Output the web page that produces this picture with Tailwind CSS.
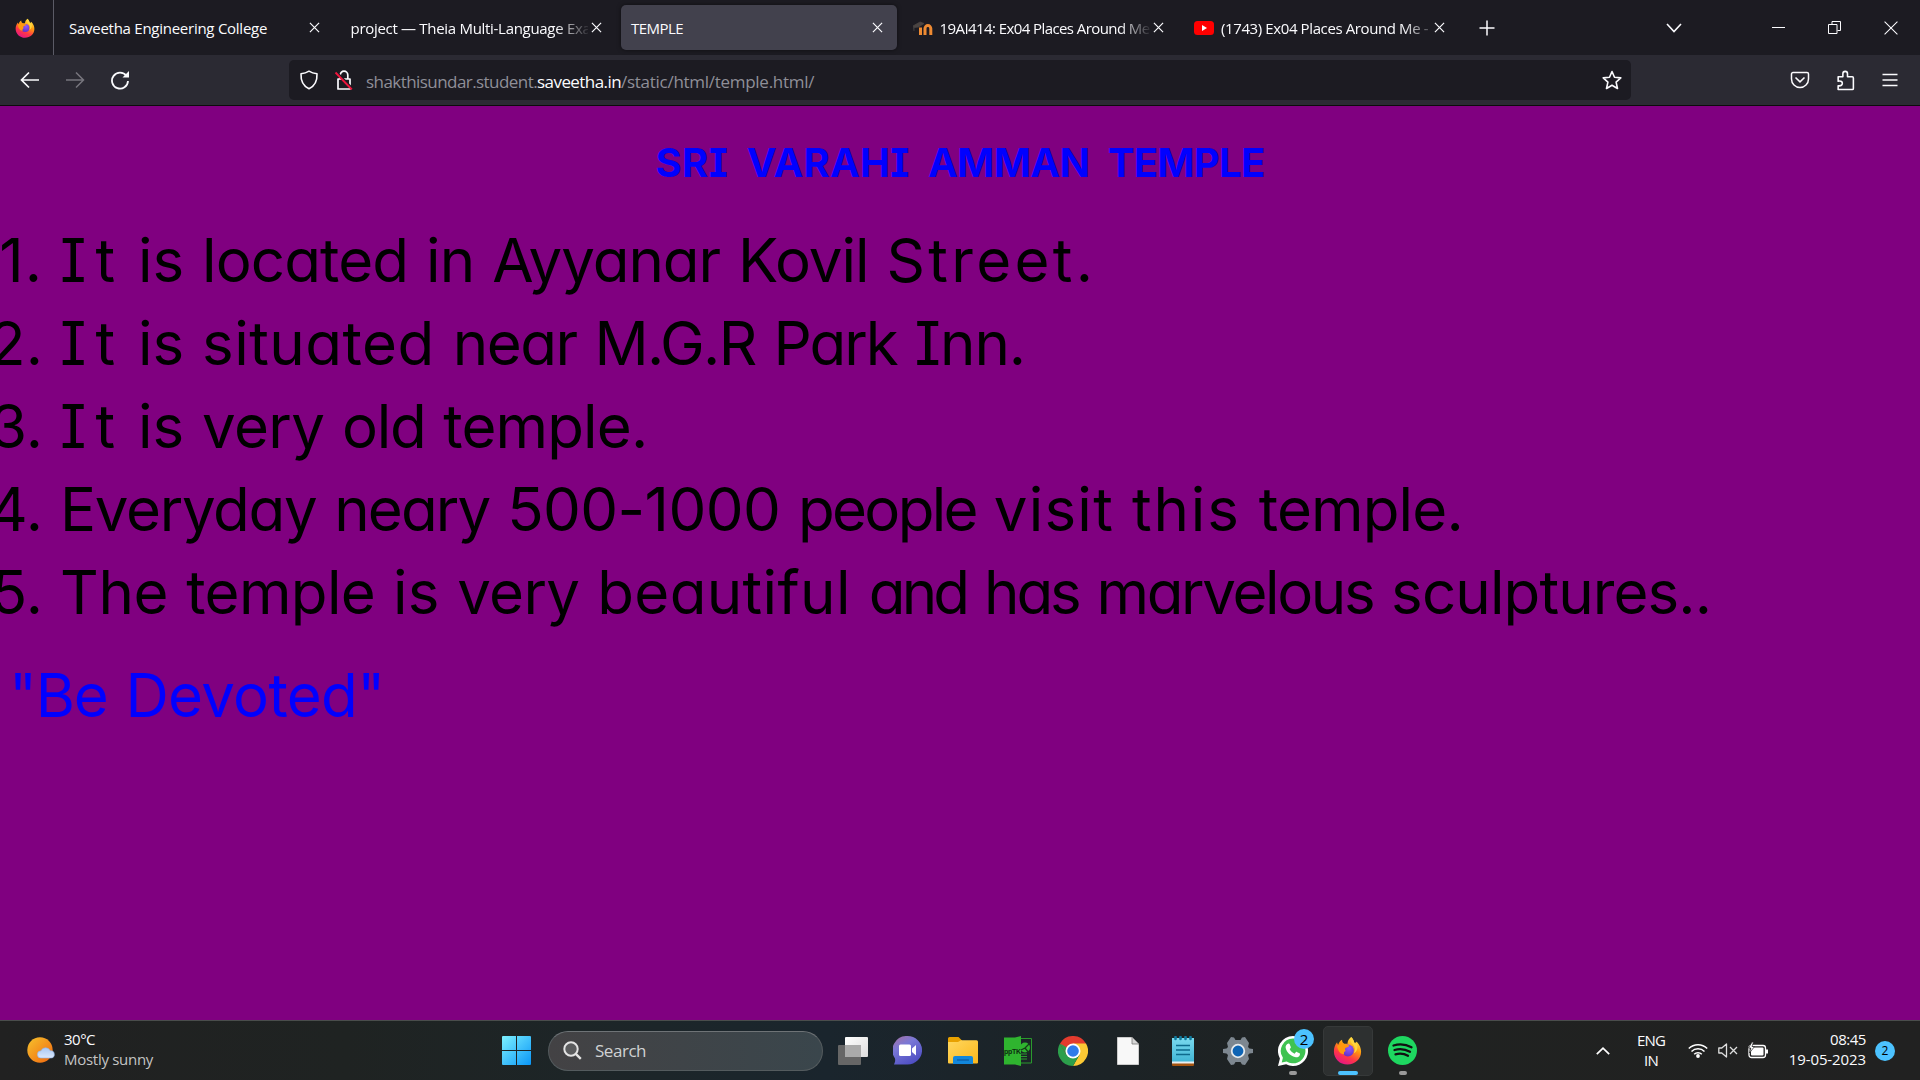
<!DOCTYPE html>
<html lang="en">
<head>
<meta charset="utf-8">
<title>TEMPLE</title>
<script src="https://cdn.jsdelivr.net/npm/@tailwindcss/browser@4"></script>
</head>
<body class="w-[1920px] h-[1080px] overflow-hidden bg-[#800080] flex flex-col font-['Segoe_UI','Open_Sans',sans-serif] text-[#fbfbfe]">
<!-- svg symbols shared by several places -->
<svg class="absolute size-0">
  <defs>
    <linearGradient id="fxBody" x1=".8" y1="0" x2=".3" y2="1"><stop offset="0" stop-color="#fff44f"/><stop offset=".4" stop-color="#ff980e"/><stop offset=".7" stop-color="#ff3647"/><stop offset="1" stop-color="#e31587"/></linearGradient>
    <radialGradient id="fxGlobe" cx=".6" cy=".3" r=".8"><stop offset="0" stop-color="#9059ff"/><stop offset="1" stop-color="#5b2bc0"/></radialGradient>
  </defs>
  <symbol id="firefox" viewBox="0 0 32 32">
    <path fill="url(#fxBody)" d="M20 1c2 2 3 4 3.600 6.500C25 7.500 26 7 26 6c3.500 3.500 5 7.500 5 11.500C31 25.500 24.500 31.500 16 31.500S1 25 1 17c0-4 1.200-7 3.500-10 .2 1.500.6 2 1.200 2.600C6.500 7 8 5 10 4c0 2 .8 3.500 2.500 4.500L16 8.500C16 5.500 17.500 3 20 1z"/>
    <circle cx="16.500" cy="16" r="6.500" fill="url(#fxGlobe)"/>
    <path fill="#ff980e" d="M4.500 11c4-2.500 7-2.600 9.500-1.500 2 .3 3.500.5 4 1.200-1 1.800-3.400 2-4.500 2.600-.3 1.500-.2 2.500.6 3.200-1.800.5-2.500 2-1.700 3.800-4 0-6.900-3.500-7.900-9.300z"/>
    <path fill="#ffd53e" d="M20 1c-1.500 3.500 0 6 2 8.500s3 5.500 1 9.500c4-2 5-6.500 3-11-.6.600-1.500.7-2.400-.4C23 5 22 3 20 1z"/>
  </symbol>
  <symbol id="x" viewBox="0 0 12 12"><path d="M1 1l10 10M11 1L1 11" fill="none" stroke="#fbfbfe" stroke-width="1.300"/></symbol>
</svg>

<!-- tab strip -->
<header class="h-[55px] shrink-0 bg-[#1c1b22] flex items-center text-[15px]">
  <div class="w-[54px] h-full border-r border-[#5b5b66] flex items-center pl-[15px]"><svg class="size-5"><use href="#firefox"/></svg></div>
  <div class="w-[281.5px] ml-[2px] h-[45px] flex items-center pl-[13px]"><div class="w-[237px] pt-[2px] whitespace-nowrap tracking-[-0.26px]">Saveetha Engineering College</div><svg class="size-[11px] ml-[3px]"><use href="#x"/></svg></div>
  <div class="w-[281.5px] h-[45px] flex items-center pl-[13px]"><div class="w-[237px] pt-[2px] whitespace-nowrap tracking-[-0.3px] [mask-image:linear-gradient(to_right,black_205px,transparent_240px)]">project — Theia Multi-Language Exa</div><svg class="size-[11px] ml-[3px]"><use href="#x"/></svg></div>
  <div class="w-[281.5px] h-[45px] pl-[2px] pr-[3.500px]"><div class="h-full rounded-[5px] bg-[#42414d] shadow-[0_0_4px_rgba(0,0,0,0.5)] flex items-center pl-[10px]"><div class="w-[238px] pt-[2px] tracking-[-0.55px]">TEMPLE</div><svg class="size-[11px] ml-[3px]"><use href="#x"/></svg></div></div>
  <div class="w-[281.5px] h-[45px] flex items-center pl-[12px]">
    <svg class="w-5 h-5 mr-[7px]" viewBox="0 0 20 20"><path d="M12 17v-6.500a2.800 2.800 0 0 1 5.800 0V17M7.500 9.500V17" fill="none" stroke="#ee8a32" stroke-width="3"/><path d="M0 8l7-4 4 1.500L5.500 9 1 9.500v3.500" fill="#4a4442" stroke="#4a4442" stroke-width=".8"/></svg>
    <div class="w-[210px] pt-[2px] whitespace-nowrap tracking-[-0.58px] [mask-image:linear-gradient(to_right,black_180px,transparent_212px)]">19AI414: Ex04 Places Around Me</div><svg class="size-[11px] ml-[3px]"><use href="#x"/></svg></div>
  <div class="w-[281.5px] h-[45px] flex items-center pl-[12px]">
    <svg class="w-5 h-5 mr-[7px]" viewBox="0 0 20 20"><rect y="3" width="20" height="14" rx="3.500" fill="red"/><path d="M8 7l5 3-5 3z" fill="#fff"/></svg>
    <div class="w-[211px] pt-[2px] whitespace-nowrap tracking-[-0.39px] [mask-image:linear-gradient(to_right,black_182px,transparent_216px)]">(1743) Ex04 Places Around Me -</div><svg class="size-[11px] ml-[2px]"><use href="#x"/></svg></div>
  <svg class="size-4 ml-[15px]" viewBox="0 0 16 16"><path d="M8 .5v15M.5 8h15" stroke="#fbfbfe" stroke-width="1.500"/></svg>
  <div class="ml-auto flex items-center">
    <svg class="w-4 h-[10px] mr-[90px]" viewBox="0 0 16 10"><path d="M1 1l7 7.500L15 1" fill="none" stroke="#fbfbfe" stroke-width="1.600"/></svg>
    <div class="w-[13px] h-px bg-[#fbfbfe] mr-[43px]"></div>
    <svg class="size-[13px] mr-[43px]" viewBox="0 0 13 13"><path d="M.5 3.500h8.500v9H.5zM4 3V.5h8.500V9.500H9.500" fill="none" stroke="#fbfbfe"/></svg>
    <svg class="size-[14px] mr-[22px]" viewBox="0 0 12 12"><path d="M.5.5l11 11M11.500.5l-11 11" stroke="#fbfbfe" stroke-width=".9"/></svg>
  </div>
</header>

<!-- navigation bar -->
<nav class="h-[51px] shrink-0 bg-[#2b2a33] border-b border-[#0c0c0d] flex items-center">
  <svg class="size-5 ml-5" viewBox="0 0 20 20"><path d="M19 10H2M9 2.500L1.500 10 9 17.500" fill="none" stroke="#fbfbfe" stroke-width="1.700"/></svg>
  <svg class="size-5 ml-[25px]" viewBox="0 0 20 20"><path d="M1 10h17M11 2.500l7.500 7.500-7.500 7.500" fill="none" stroke="#77767e" stroke-width="1.500"/></svg>
  <svg class="size-5 ml-[25px]" viewBox="0 0 20 20"><path d="M16.500 6A8 8 0 1 0 18 11" fill="none" stroke="#fbfbfe" stroke-width="1.800"/><path d="M19 1v6.500h-6.500z" fill="#fbfbfe"/></svg>
  <div class="ml-[159px] w-[1342px] h-10 rounded-[5px] bg-[#1c1b22] flex items-center">
    <svg class="size-5 ml-[10px]" viewBox="0 0 20 20"><path d="M10 1.200c2.500 1.600 5 2.300 8 2.600.3 6.700-2 12.200-8 15C4 16 1.700 10.500 2 3.800c3-.3 5.500-1 8-2.600z" fill="none" stroke="#fbfbfe" stroke-width="1.600" stroke-linejoin="round"/></svg>
    <svg class="size-5 ml-[15px]" viewBox="0 0 20 20"><path d="M6.200 9V5a3.800 3.800 0 0 1 7.600 0v4M4 9h12v10H4z" fill="none" stroke="#fbfbfe" stroke-width="1.700" stroke-linejoin="round"/><path d="M3 2.500L18.500 18.500" stroke="#1c1b22" stroke-width="2"/><path d="M1.500 2.500L17.800 19.500" stroke="#f0143c" stroke-width="1.900"/></svg>
    <div class="ml-[12px] pt-[3px] text-[17px] whitespace-nowrap text-[#8f8f98]"><span class="tracking-[-0.56px]">shakthisundar.student.</span><span class="tracking-[-0.57px] text-[#fbfbfe]">saveetha.in</span><span class="tracking-[-0.28px]">/static/html/temple.html/</span></div>
    <svg class="size-5 ml-auto mr-[9px]" viewBox="0 0 20 20"><path d="M10 1.500l2.500 5.800 6.300.6-4.700 4.200 1.400 6.400L10 15.200l-5.500 3.300 1.400-6.400L1.200 7.900l6.300-.6z" fill="none" stroke="#fbfbfe" stroke-width="1.600" stroke-linejoin="round"/></svg>
  </div>
  <svg class="size-5 ml-[159px]" viewBox="0 0 20 20"><path d="M3 2.500h14a1.500 1.500 0 0 1 1.500 1.500v5a8.500 8.500 0 0 1-17 0V4A1.500 1.500 0 0 1 3 2.500z" fill="none" stroke="#fbfbfe" stroke-width="1.500"/><path d="M5.500 7.500L10 11.800l4.500-4.300" fill="none" stroke="#fbfbfe" stroke-width="1.600"/></svg>
  <svg class="size-[21px] ml-[25px]" viewBox="0 0 20 20"><path d="M3 18.500V15c3 .5 4-1 4-2.300S6 10 3 10.700V6.500h4.500V3.500a2.200 2.200 0 0 1 4.400 0v3h4.600a1 1 0 0 1 1 1v10a1 1 0 0 1-1 1z" fill="none" stroke="#fbfbfe" stroke-width="1.500" stroke-linejoin="round"/></svg>
  <svg class="w-4 h-[14px] ml-[26px]" viewBox="0 0 16 14"><path d="M.5 1.500h15M.5 7h15M.5 12.500h15" stroke="#fbfbfe" stroke-width="1.400"/></svg>
</nav>

<!-- page -->
<main class="grow text-black font-['Inter',sans-serif] [font-feature-settings:'cv08','cv11']">
  <h1 class="mt-[29px] h-[56px] leading-[56px] text-center text-[40px] font-bold text-[#0000ff] [word-spacing:9px]"><span class="tracking-[0.4px]">SRI</span> <span class="tracking-[0.2px]">VARAHI</span> <span class="tracking-[-0.7px]">AMMAN</span> <span class="tracking-[-0.7px]">TEMPLE</span></h1>
  <ol class="mt-[28px] text-[60px] leading-[83px] whitespace-nowrap [word-spacing:1px]">
    <li class="flex"><span class="w-[43px] mr-[17px] flex justify-end tracking-[1px]">1.</span><p><span class="tracking-[9px]">I</span><span class="tracking-[5px]">t</span> is <span class="tracking-[-0.88px]">located</span> <span class="tracking-[-0.91px]">in</span> <span class="tracking-[-1.01px]">Ayyanar</span> <span class="tracking-[-0.98px]">Kovil</span> <span class="tracking-[3.3px]">Street.</span></p></li>
    <li class="flex"><span class="w-[43px] mr-[17px] flex justify-end">2.</span><p><span class="tracking-[9px]">I</span><span class="tracking-[5px]">t</span> is <span class="tracking-[0.49px]">situated</span> <span class="tracking-[-1.48px]">near</span> <span class="tracking-[-1.65px]">M.G.R</span> <span class="tracking-[-2px]">Park</span> <span class="tracking-[-1.04px]">Inn.</span></p></li>
    <li class="flex"><span class="w-[43px] mr-[17px] flex justify-end">3.</span><p><span class="tracking-[9px]">I</span><span class="tracking-[5px]">t</span> is <span class="tracking-[-0.66px]">very</span> <span class="tracking-[-1.31px]">old</span> <span class="tracking-[-0.87px]">temple.</span></p></li>
    <li class="flex"><span class="w-[43px] mr-[17px] flex justify-end">4.</span><p><span class="tracking-[-1.31px]">Everyday</span> <span class="tracking-[-1.87px]">neary</span> <span class="tracking-[-0.6px]">500-1000</span> <span class="tracking-[-2.69px]">people</span> <span class="tracking-[1.24px]">visit</span> <span class="tracking-[1.92px]">this</span> <span class="tracking-[-0.87px]">temple.</span></p></li>
    <li class="flex"><span class="w-[43px] mr-[17px] flex justify-end">5.</span><p><span class="tracking-[-0.3px]">The</span> <span class="tracking-[-0.63px]">temple</span> is <span class="tracking-[-0.66px]">very</span> <span class="tracking-[0.37px]">beautiful</span> <span class="tracking-[-3.84px]">and</span> <span class="tracking-[-3.08px]">has</span> <span class="tracking-[-2.37px]">marvelous</span> <span class="tracking-[-0.88px]">sculptures..</span></p></li>
  </ol>
  <p class="mt-[20px] ml-[9px] text-[60px] leading-[83px] text-[#0000ff] [word-spacing:1px]"><span class="tracking-[-1.2px]">"Be</span> <span class="tracking-[-0.67px]">Devoted"</span></p>
</main>

<!-- taskbar -->
<footer class="h-[60px] shrink-0 border-t border-[#4a4d4c] bg-[linear-gradient(to_right,#212121_0%,#1f2322_18%,#1d2527_30%,#1a252d_43%,#1c2326_58%,#202221_72%,#212121_100%)] flex items-center text-[15px] leading-5">
  <div class="w-[502px] flex items-center pl-[27px]">
    <svg class="w-7 h-[27px]" viewBox="0 0 28 27"><defs><linearGradient id="sun" x1="0" y1="0" x2="1" y2="1"><stop stop-color="#f6c22d"/><stop offset="1" stop-color="#f0650e"/></linearGradient><linearGradient id="cl" x2="0" y2="1"><stop stop-color="#a9c8f5"/><stop offset="1" stop-color="#dbe8fb"/></linearGradient></defs><circle cx="13" cy="13" r="12.700" fill="url(#sun)"/><path d="M14 21a3.600 3.600 0 0 1 0-7.200 5 5 0 0 1 9.200 0 3.600 3.600 0 0 1 1 7.200z" fill="url(#cl)" stroke="#8fb0e6" stroke-width=".6"/></svg>
    <div class="ml-[9px] pb-1"><div class="tracking-[-0.51px]">30°C</div><div class="text-[#c4c4c4] tracking-[-0.28px]">Mostly sunny</div></div>
  </div>
  <svg class="size-[29px]" viewBox="0 0 29 29"><defs><linearGradient id="win" x1="0" y1="0" x2="1" y2="1"><stop stop-color="#7df1ff"/><stop offset="1" stop-color="#0a96f7"/></linearGradient></defs><path d="M1 0h13v14H0V1a1 1 0 0 1 1-1zM15 0h13a1 1 0 0 1 1 1v13H15zM0 15h14v14H1a1 1 0 0 1-1-1zM15 15h14v13a1 1 0 0 1-1 1H15z" fill="url(#win)"/></svg>
  <div class="ml-[17px] w-[275px] h-10 rounded-full border border-[#545b5e] border-t-[#6e7376] bg-linear-to-r from-[#434244] to-[#3a464c] flex items-center pl-[14px] text-[17px] text-[#d0d2d3]">
    <svg class="size-[19px] mr-[13px]" viewBox="0 0 19 19"><circle cx="8" cy="8" r="6.700" fill="#5b5c5e" stroke="#e4e4e4" stroke-width="2"/><path d="M12.800 12.800l5 5" stroke="#e4e4e4" stroke-width="2.400"/></svg>
    <span class="tracking-[-0.47px]">Search</span>
  </div>
  <div class="ml-[2px] grid grid-cols-[repeat(11,55px)] h-full items-center justify-items-center">
    <svg class="w-[30px] h-[28px]" viewBox="0 0 30 28"><defs><linearGradient id="tv" x2="1" y2="1"><stop stop-color="#fff"/><stop offset="1" stop-color="#ddd"/></linearGradient></defs><rect y="8" width="23" height="20" rx="1" fill="#666"/><rect x="7" width="23" height="20" rx="1" fill="url(#tv)"/><path d="M7 8h16v12H7z" fill="#aaa"/></svg>
    <svg class="size-[29px]" viewBox="0 0 29 29"><defs><linearGradient id="ch" x1="0" y1="0" x2=".6" y2="1"><stop stop-color="#a9709f"/><stop offset=".4" stop-color="#7a78d6"/><stop offset="1" stop-color="#4f4fc4"/></linearGradient></defs><path d="M14.500 0a14.500 14.200 0 0 1 0 28.500H1c1-2 1.500-3.500 1-6A14.500 14.300 0 0 1 14.500 0z" fill="url(#ch)"/><rect x="6" y="8.500" width="12" height="11.500" rx="1.500" fill="#fff"/><path d="M19 12.500l4-3.500v10.500l-4-3.500z" fill="#fff"/></svg>
    <svg class="w-[30px] h-[27px]" viewBox="0 0 30 27"><defs><linearGradient id="fo" x1="0" y1="0" x2="1" y2="1"><stop stop-color="#ffd75e"/><stop offset="1" stop-color="#fbb71c"/></linearGradient></defs><path d="M0 1.500A1.500 1.500 0 0 1 1.500 0h9L14 3.500v6H0z" fill="#e8a100"/><path d="M0 5h10l3-1.800h15.500A1.500 1.500 0 0 1 30 4.700V25.500a1 1 0 0 1-1 1H1a1 1 0 0 1-1-1z" fill="url(#fo)"/><path d="M5 27v-6a2 2 0 0 1 2-2h16a2 2 0 0 1 2 2v6z" fill="#1287dc"/><path d="M9 23h12" stroke="#0c5aa0" stroke-width="1.200"/></svg>
    <svg class="w-[28px] h-[30px]" viewBox="0 0 28 30"><path d="M17 2.500h10.500v24.500H17M17 18h6M17 20.500h6M17 23h6" fill="none" stroke="#2a9a2d" stroke-width="1"/><circle cx="21" cy="11.500" r="5" fill="#2fb42f"/><path d="M16 14.500l5-2.500 5-5M21 12l4 5" stroke="#153a18" stroke-width="1.300" fill="none"/><path d="M0 1.500h11L17 0v30l-6-1.500H0z" fill="#2fb42f"/><text x="0" y="18" font-size="7" font-weight="700" font-family="Liberation Sans" textLength="17" fill="#0d2b10">ppTK</text></svg>
    <svg class="size-[30px]" viewBox="0 0 48 48"><path d="M24 24L3.200 12A24 24 0 0 1 44.800 12z" fill="#e33b2e"/><path d="M24 24V12h20.800A24 24 0 0 1 24 48l10.400-18z" fill="#fcc934"/><path d="M24 24l10.400 6L24 48A24 24 0 0 1 3.200 12l10.400 18z" fill="#2c9f4b"/><path d="M3.200 12L13.600 30 24 12z" fill="#e33b2e"/><path d="M3.200 12L13.600 30 24 24z" fill="#2c9f4b"/><circle cx="24" cy="24" r="12" fill="#fff"/><circle cx="24" cy="24" r="9.300" fill="#2f7bea"/></svg>
    <svg class="w-[22px] h-[28px]" viewBox="0 0 22 28"><path d="M0 0h15l7 7v21H0z" fill="#f8f8f8" stroke="#8c8c8c" stroke-width=".8"/><path d="M15 0v7h7z" fill="#d6d6d6" stroke="#777" stroke-width=".8"/></svg>
    <svg class="w-[22px] h-[30px]" viewBox="0 0 22 30"><defs><linearGradient id="np" x2="0" y2="1"><stop stop-color="#7ad9ee"/><stop offset="1" stop-color="#3eb4d4"/></linearGradient></defs><rect y="2" width="22" height="25" fill="url(#np)"/><path d="M0 25.500h22V28H0z" fill="#e9eef0"/><path d="M0 27.500h22v1.500a1 1 0 0 1-1 1H1a1 1 0 0 1-1-1z" fill="#a4530f"/><path d="M4 9.500h14M4 14h14M4 18.500h14" stroke="#0d6a8c" stroke-width="1.500"/><path d="M3.500 1v2M8.500 1v2M13.500 1v2M18.500 1v2" stroke="#0f7a9e" stroke-width="2.600" stroke-linecap="round"/></svg>
    <svg class="size-[30px]" viewBox="0 0 30 30"><path d="M8 1l3 .5 1.500 2.500h5L19 1.500 22 1l4 6-1 4 1.500 1.500L30 13v4l-3.500.5L25 19l1 4-4 6-3-.5-1.500-2.500h-5L11 28.500 8 29l-4-6 1-4-1.500-1.500L0 17v-4l3.500-.5L5 11 4 7z" fill="#7d8790"/><circle cx="15" cy="15" r="6.300" fill="#0e64b4" stroke="#e6eaed" stroke-width="1.800"/></svg>
    <div class="relative size-full flex items-center justify-center">
      <svg class="size-[30px]" viewBox="0 0 30 30"><path d="M15 0a15 15 0 1 1-6.900 28.300L0 30l1.900-7.600A15 15 0 0 1 15 0z" fill="#fff"/><path d="M15 2.500a12.400 12.400 0 1 1-6.400 23L3.700 26.500l1.200-4.700A12.400 12.400 0 0 1 15 2.500z" fill="#3fc351"/><path d="M10.500 7.500c.7 0 1 .2 1.300.9l1 2.500c.2.500-.1 1-1.200 2.200 1 2.200 2.700 3.600 5 4.600 1.500-1.900 1.600-2 2.200-1.800l2.700 1.300c.6.300.6.700.4 1.600-.5 2-2.500 2.700-4 2.500-5-.8-9.500-5-10.300-9.800-.2-1.800 1.200-3.800 2.900-4z" fill="#fff"/></svg>
      <span class="absolute left-[29px] top-[8px] size-5 rounded-full bg-[#4cc2ff] text-black text-[15px] leading-5 text-center">2</span>
      <i class="absolute bottom-[5px] w-2 h-1 rounded-full bg-[#9a9a9a]"></i>
    </div>
    <div class="relative size-[50px] rounded-[5px] bg-[#2d3030] border border-[#363939] flex items-center justify-center">
      <svg class="size-[29px]"><use href="#firefox"/></svg>
      <i class="absolute bottom-0 w-5 h-1 rounded-full bg-[#4cc2ff]"></i>
    </div>
    <div class="relative size-full flex items-center justify-center">
      <svg class="size-[29px]" viewBox="0 0 29 29"><circle cx="14.500" cy="14.500" r="14.500" fill="#1ed760"/><path d="M5.500 9.500c6-1.800 12.500-1.200 18 1.800M6.500 14c5-1.500 10.500-1 15.500 1.800M7.500 18.300c4.500-1.200 8.500-.8 12.500 1.500" fill="none" stroke="#111" stroke-width="2.300" stroke-linecap="round"/></svg>
      <i class="absolute bottom-[5px] w-2 h-1 rounded-full bg-[#9a9a9a]"></i>
    </div>
  </div>
  <div class="ml-auto flex items-center pr-[25px]">
    <svg class="w-[14px] h-2 mr-[27px]" viewBox="0 0 14 8"><path d="M.8 7.200L7 1.200l6.200 6" fill="none" stroke="#fff" stroke-width="1.700"/></svg>
    <div class="w-[28px] text-center mr-[23px] pb-[2px] whitespace-nowrap"><div class="tracking-[-0.8px]">ENG</div><div class="tracking-[-0.7px]">IN</div></div>
    <svg class="w-5 h-[15px] mr-[10px]" viewBox="0 0 20 15"><g fill="none" stroke="#fff" stroke-width="1.500"><path d="M.8 5.500a13 13 0 0 1 18.400 0M3.500 8.500a9.200 9.200 0 0 1 13 0M6.200 11.200a5.400 5.400 0 0 1 7.600 0"/></g><circle cx="10" cy="13" r="1.900" fill="#fff"/></svg>
    <svg class="w-5 h-[15px] mr-[10px]" viewBox="0 0 20 15"><path d="M.8 5h3L8.500 1v13l-4.700-4h-3z" fill="none" stroke="#ddd" stroke-width="1.300" stroke-linejoin="round"/><path d="M12 4l7 7M19 4l-7 7" stroke="#ddd" stroke-width="1.300"/></svg>
    <svg class="w-5 h-[17px] mr-[20px]" viewBox="0 0 20 17"><rect x="1" y="3.500" width="16.500" height="12" rx="2.500" fill="none" stroke="#fff" stroke-width="1.300"/><rect x="3" y="5.500" width="12.500" height="8" rx="1" fill="#fff"/><path d="M18 7.500h2v4h-2z" fill="#fff"/><path d="M4 0L.5 6h2.300L1.500 11 6.500 4.500H4L5.500 0z" fill="#fff" stroke="#212121" stroke-width=".7"/></svg>
    <div class="w-[78px] text-right whitespace-nowrap mr-[9px] pb-1"><div class="tracking-[-0.45px]">08:45</div><div class="tracking-[-0.1px]">19-05-2023</div></div>
    <span class="size-5 rounded-full bg-[#4cc2ff] text-black text-[12px] leading-5 text-center">2</span>
  </div>
</footer>
</body>
</html>
